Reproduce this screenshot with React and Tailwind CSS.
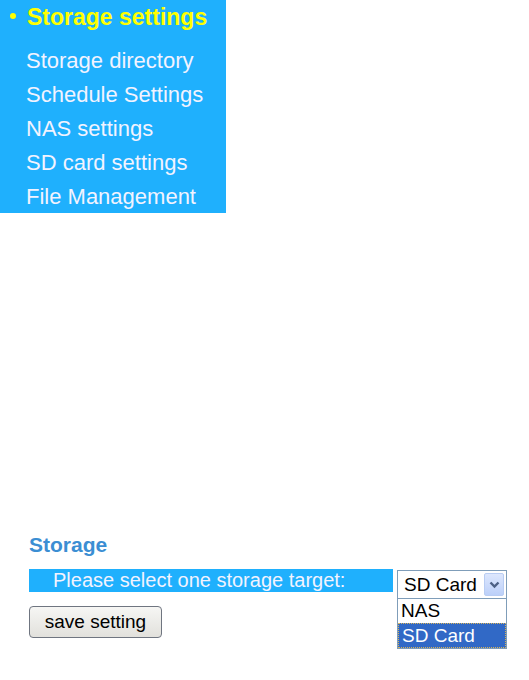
import React from 'react';

const menuItems = ['Storage directory', 'Schedule Settings', 'NAS settings', 'SD card settings', 'File Management'];

const SideMenu = () => (
    <div className="w-[226px] h-[213px] bg-[#1fb0fd] overflow-hidden">
        <div className="h-[34px] flex items-center">
            <span className="w-[6px] h-[6px] rounded-full bg-[#ffff00] ml-[10px] mr-[11px] mt-[-2px]" />
            <span className="text-[23px] leading-[34px] font-bold text-[#ffff00]">Storage settings</span>
        </div>
        <div className="mt-[10px]">
            {menuItems.map((item) => (
                <div key={item} className="h-[34px] pl-[26px] text-[22px] leading-[34px] text-[#f2f3ff]">
                    {item}
                </div>
            ))}
        </div>
    </div>
);

const StorageSelect = () => (
    <div className="relative ml-[4px] mt-[1px]">
        <div className="w-[110px] h-[29px] border border-[#7f9db9] bg-white flex items-center justify-between pl-[6px] pr-[2px]">
            <span className="text-[19px] leading-[27px] text-black">SD Card</span>
            <span className="w-[20px] h-[23px] rounded-[2px] border border-[#b9cdf3] bg-gradient-to-b from-[#dde7fd] to-[#bcd0f9] flex items-center justify-center">
                <svg width="11" height="8" viewBox="0 0 11 8">
                    <path d="M1.5 1.5 L5.5 5.5 L9.5 1.5" fill="none" stroke="#4d6185" strokeWidth="2.4" />
                </svg>
            </span>
        </div>
        <div className="absolute left-0 top-[29px] w-[110px] border border-t-0 border-[#7f9db9] bg-white">
            <div className="h-[24px] pl-[3px] text-[19px] leading-[24px] text-black">NAS</div>
            <div className="h-[25px] pl-[3px] text-[19px] leading-[23px] text-white bg-[#3169c6] border border-dotted border-[#d9b45a]">
                SD Card
            </div>
        </div>
    </div>
);

const App = () => {
    return (
        <div className="w-[529px] h-[680px] bg-white relative" style={{ fontFamily: '"Liberation Sans", Arial, sans-serif' }}>
            <SideMenu />
            <div className="pl-[29px] pt-[320px]">
                <h2 className="text-[21px] leading-[24px] font-bold text-[#3b8ed3]">Storage</h2>
                <div className="mt-[12px] flex items-start">
                    <div className="w-[364px] h-[23px] bg-[#1fb0fd] pl-[24px] text-[20px] leading-[23px] text-[#f2f3ff]">
                        Please select one storage target:
                    </div>
                    <StorageSelect />
                </div>
                <button className="mt-[7px] w-[133px] h-[32px] rounded-[4px] border border-[#6f7580] bg-gradient-to-b from-[#f6f6f4] to-[#e2e1dc] text-[19px] leading-[30px] text-black">
                    save setting
                </button>
            </div>
        </div>
    );
};

export default App;
